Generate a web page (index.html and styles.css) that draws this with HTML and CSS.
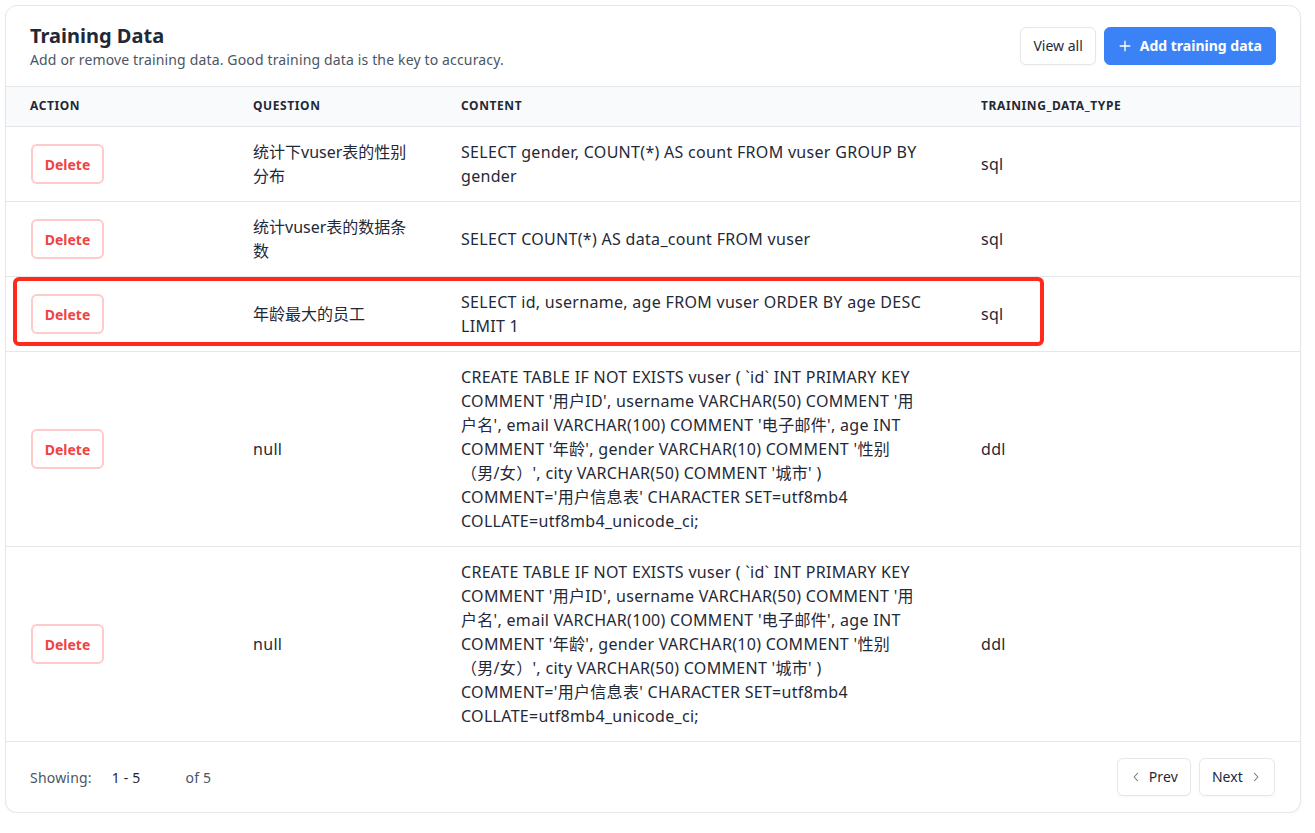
FILE: index.html
```html
<!DOCTYPE html>
<html lang="zh">
<head>
<meta charset="utf-8">
<title>Training Data</title>
<link rel="stylesheet" href="styles.css">
</head>
<body>
<div class="card">
  <div class="card-header">
    <div class="titles">
      <h2 class="title">Training Data</h2>
      <p class="subtitle">Add or remove training data. Good training data is the key to accuracy.</p>
    </div>
    <div class="actions">
      <button class="btn btn-white">View all</button>
      <button class="btn btn-primary"><svg class="plus" viewBox="0 0 16 16" width="14" height="14"><path d="M8 2.5v11M2.5 8h11" stroke="currentColor" stroke-width="1.6" stroke-linecap="round" fill="none"/></svg>Add training data</button>
    </div>
  </div>
  <table class="data">
    <colgroup>
      <col class="c-action"><col class="c-question"><col class="c-content"><col>
    </colgroup>
    <thead>
      <tr><th>Action</th><th>Question</th><th>Content</th><th>Training_Data_Type</th></tr>
    </thead>
    <tbody>
      <tr>
        <td><button class="btn-del">Delete</button></td>
        <td class="q">统计下vuser表的性别分布</td>
        <td class="txt content">SELECT gender, COUNT(*) AS count FROM vuser GROUP BY gender</td>
        <td class="txt">sql</td>
      </tr>
      <tr>
        <td><button class="btn-del">Delete</button></td>
        <td class="q">统计vuser表的数据条数</td>
        <td class="txt content">SELECT COUNT(*) AS data_count FROM vuser</td>
        <td class="txt">sql</td>
      </tr>
      <tr class="marked">
        <td><button class="btn-del">Delete</button><span class="highlight"></span></td>
        <td class="q">年龄最大的员工</td>
        <td class="txt content">SELECT id, username, age FROM vuser ORDER BY age DESC LIMIT 1</td>
        <td class="txt">sql</td>
      </tr>
      <tr>
        <td><button class="btn-del">Delete</button></td>
        <td class="q txt">null</td>
        <td class="txt content">CREATE TABLE IF NOT EXISTS vuser ( `id` INT PRIMARY KEY COMMENT '用户ID', username VARCHAR(50) COMMENT '用户名', email VARCHAR(100) COMMENT '电子邮件', age INT COMMENT '年龄', gender VARCHAR(10) COMMENT '性别（男/女）', city VARCHAR(50) COMMENT '城市' ) COMMENT='用户信息表' CHARACTER SET=utf8mb4 COLLATE=utf8mb4_unicode_ci;</td>
        <td class="txt">ddl</td>
      </tr>
      <tr>
        <td><button class="btn-del">Delete</button></td>
        <td class="q txt">null</td>
        <td class="txt content">CREATE TABLE IF NOT EXISTS vuser ( `id` INT PRIMARY KEY COMMENT '用户ID', username VARCHAR(50) COMMENT '用户名', email VARCHAR(100) COMMENT '电子邮件', age INT COMMENT '年龄', gender VARCHAR(10) COMMENT '性别（男/女）', city VARCHAR(50) COMMENT '城市' ) COMMENT='用户信息表' CHARACTER SET=utf8mb4 COLLATE=utf8mb4_unicode_ci;</td>
        <td class="txt">ddl</td>
      </tr>
    </tbody>
  </table>
  <div class="card-footer">
    <div class="showing">
      <span class="muted">Showing:</span>
      <span class="range">1 - 5</span>
      <span class="muted">of 5</span>
    </div>
    <div class="pager">
      <button class="btn btn-white btn-page"><svg viewBox="0 0 16 16" width="12" height="12"><path d="M10 3L5.5 8 10 13" stroke="currentColor" stroke-width="1.4" fill="none" stroke-linecap="round" stroke-linejoin="round"/></svg>Prev</button>
      <button class="btn btn-white btn-page">Next<svg viewBox="0 0 16 16" width="12" height="12"><path d="M6 3l4.5 5L6 13" stroke="currentColor" stroke-width="1.4" fill="none" stroke-linecap="round" stroke-linejoin="round"/></svg></button>
    </div>
  </div>
</div>
</body>
</html>
```
FILE: styles.css
```css
* { box-sizing: border-box; }
html, body { background: #ffffff; }
body {
  margin: 0;
  padding: 5px 14px 0 5px;
  font-family: "Noto Sans", "Noto Sans CJK SC", sans-serif;
  color: #1f2937;
  text-spacing-trim: space-all;
}
.card {
  width: 1296px;
  border: 1px solid #e5e7eb;
  border-radius: 12px;
  box-shadow: 0 1px 2px rgba(0,0,0,0.06);
  background: #fff;
  overflow: hidden;
}
.card-header {
  display: flex;
  justify-content: space-between;
  align-items: center;
  padding: 16px 24px 16px 24px;
  border-bottom: 1px solid #e5e7eb;
}
.title {
  margin: 0;
  font-size: 20px;
  line-height: 28px;
  font-weight: 700;
  color: #1f2937;
}
.subtitle {
  margin: 0;
  font-size: 14px;
  line-height: 20px;
  color: #4b5563;
  letter-spacing: 0.15px;
}
.actions { display: flex; gap: 8px; }
.btn {
  font-family: inherit;
  font-size: 14px;
  line-height: 20px;
  height: 38px;
  padding: 0 12px;
  border-radius: 6px;
  display: inline-flex;
  align-items: center;
  gap: 8px;
  cursor: pointer;
}
.btn-white {
  background: #fff;
  border: 1px solid #e5e7eb;
  color: #1f2937;
  box-shadow: 0 1px 2px rgba(0,0,0,0.04);
}
.btn-primary {
  background: #3b82f6;
  border: 1px solid #3b82f6;
  color: #fff;
  font-weight: 700;
  padding: 0 13px;
}
.plus { display: block; }
table.data {
  width: 100%;
  border-collapse: collapse;
  table-layout: fixed;
}
.c-action { width: 223px; }
.c-question { width: 208px; }
.c-content { width: 520px; }
thead th {
  background: #f9fafb;
  text-align: left;
  font-size: 12px;
  line-height: 16px;
  font-weight: 700;
  text-transform: uppercase;
  color: #1f2937;
  letter-spacing: 0.6px;
  padding: 11px 24px 12px 24px;
  border-bottom: 1px solid #e5e7eb;
}
tbody td {
  font-size: 16px;
  line-height: 24px;
  padding: 13px 24px;
  vertical-align: middle;
  border-bottom: 1px solid #e5e7eb;
  color: #1f2937;
}
tbody td.txt { letter-spacing: 0.3px; }
tbody td.content { padding-right: 32px; }
tbody td:first-child { padding-left: 25px; }
.btn-del {
  font-family: inherit;
  font-size: 14px;
  font-weight: 700;
  color: #ef4444;
  background: #fff;
  border: 2px solid #fecaca;
  border-radius: 6px;
  width: 73px;
  height: 40px;
  cursor: pointer;
}
.marked td:first-child { position: relative; }
.highlight {
  position: absolute;
  left: 7px;
  top: 0;
  width: 1031px;
  height: 69px;
  border: 4px solid #ff2a1c;
  border-radius: 6px;
  pointer-events: none;
}
.card-footer {
  display: flex;
  justify-content: space-between;
  align-items: center;
  padding: 16px 24px 16px 24px;
  height: 70px;
}
.showing { font-size: 14px; display: flex; letter-spacing: 0.2px; }
.muted { color: #4b5563; }
.range { color: #1f2937; margin-left: 20px; margin-right: 45px; }
.pager { display: flex; gap: 8px; padding-right: 1px; }
.btn-page { height: 38px; padding: 0 12px; gap: 7px; letter-spacing: 0.1px; }
.btn-page svg { color: #6b7280; }
```
